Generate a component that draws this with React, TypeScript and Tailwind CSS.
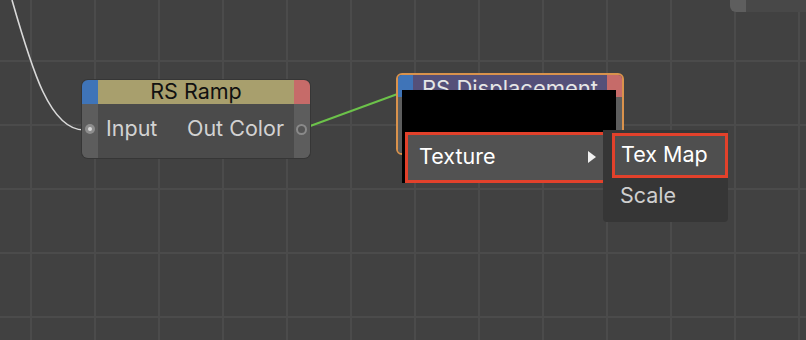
import React from 'react';

const font = { fontFamily: 'Inter, "Liberation Sans", sans-serif' };

const Port = ({ hollow }: { hollow?: boolean }) =>
  hollow ? (
    <span className="block w-[11px] h-[11px] rounded-full border-2 border-[#8a8a8a] bg-[#555]" />
  ) : (
    <span className="flex items-center justify-center w-[10px] h-[10px] rounded-full bg-[#8d8d8d]">
      <span className="w-[4px] h-[4px] rounded-full bg-[#d8d8d8]" />
    </span>
  );

const RampNode = () => (
  <div className="absolute left-[82px] top-[80px] w-[228px] h-[78px] rounded-[6px] grid grid-cols-[16px_1fr_16px] grid-rows-[24px_1fr] shadow-[0_0_0_1px_#363636]">
    <div className="bg-[#3f74b8] rounded-tl-[6px]" />
    <div className="bg-[#a89f6d] flex items-center justify-center text-[21.5px] text-[#111] leading-none">RS Ramp</div>
    <div className="bg-[#c66b69] rounded-tr-[6px]" />
    <div className="bg-[#5d5d5d] rounded-bl-[6px] flex items-center justify-center pb-[4px]">
      <Port />
    </div>
    <div className="bg-[#4b4b4b] flex items-center justify-between pl-[8px] pr-[10px] pb-[6px] text-[21.5px] text-[#d2d2d2]">
      <span>Input</span>
      <span>Out Color</span>
    </div>
    <div className="bg-[#5d5d5d] rounded-br-[6px] flex items-center justify-center pb-[4px] pr-[2px]">
      <Port hollow />
    </div>
  </div>
);

const DisplacementNode = () => (
  <div className="absolute left-[396px] top-[73px] w-[228px] h-[82px] rounded-[6px] border-2 border-[#d9924c] overflow-hidden grid grid-cols-[15px_1fr_15px] grid-rows-[22px_1fr]">
    <div className="bg-[#3f74b8]" />
    <div className="bg-[#555079] text-center text-[22px] text-[#e6e6e6] leading-[26px]">RS Displacement</div>
    <div className="bg-[#c66b69]" />
    <div className="bg-[#5d5d5d]" />
    <div className="bg-[#4b4b4b]" />
    <div className="bg-[#5d5d5d]" />
  </div>
);

const Menu = () => (
  <div className="absolute left-[402px] top-[90px] w-[214px] h-[93px] bg-black flex flex-col justify-end pl-[3px]">
    <div className="w-[203px] h-[51px] border-[3px] border-[#e2412b] bg-[#525252] flex items-center justify-between pl-[11px] pr-[8px] pb-[2px] text-[21.5px] text-white">
      <span>Texture</span>
      <svg width="10" height="14" viewBox="0 0 10 14"><path d="M1 1 L9 7 L1 13 Z" fill="#f0f0f0" /></svg>
    </div>
  </div>
);

const SubMenu = () => (
  <div className="absolute left-[603px] top-[130px] w-[125px] h-[92px] bg-[#363636] rounded-b-[4px] flex flex-col items-end pt-[3px]">
    <div className="w-[116px] h-[45px] border-[3px] border-[#e2412b] bg-[#4f4f4f] flex items-center pl-[6px] pb-[3px] text-[21.5px] text-white">Tex Map</div>
    <div className="w-[116px] flex-1 flex items-center pl-[8px] pb-[9px] text-[21.5px] text-[#cfcfcf]">Scale</div>
  </div>
);

export default function App() {
  return (
    <div
      className="relative w-[806px] h-[340px] overflow-hidden bg-[#414141] bg-[linear-gradient(to_right,#4b4b4b_2px,transparent_2px),linear-gradient(to_bottom,#4b4b4b_2px,transparent_2px)] bg-[size:64px_64px] bg-[position:30px_60px]"
      style={font}
    >
      <div className="absolute left-[730px] top-0 w-[76px] h-[12px] rounded-bl-[6px] overflow-hidden flex">
        <div className="w-[16px] bg-[#5e5e5e]" />
        <div className="flex-1 bg-[#484848]" />
      </div>
      <svg className="absolute left-0 top-0" width="806" height="340">
        <path d="M12 0 C 32 70, 50 130, 84 130" stroke="#d9d9d9" strokeWidth="1.6" fill="none" />
        <line x1="302" y1="129" x2="403" y2="92" stroke="#6cc24a" strokeWidth="2" />
      </svg>
      <RampNode />
      <DisplacementNode />
      <Menu />
      <SubMenu />
    </div>
  );
}
